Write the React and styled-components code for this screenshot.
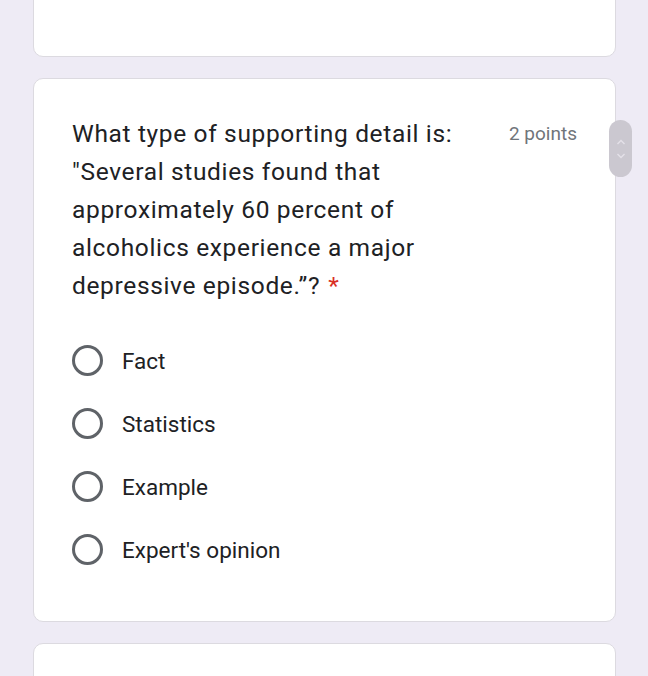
import React from "react";
import styled, { createGlobalStyle } from "styled-components";

const GlobalStyle = createGlobalStyle`
  html, body {
    margin: 0;
    padding: 0;
    background: #eeebf5;
    font-family: Roboto, "Liberation Sans", sans-serif;
    overflow: hidden;
  }
`;

const Page = styled.div`
  position: relative;
  height: 676px;
  overflow: hidden;
  padding: 0 32px 0 33px;
  display: flex;
  flex-direction: column;
  gap: 21px;
`;

const Card = styled.div`
  background: #fff;
  border: 1px solid #dcdae0;
  border-radius: 10px;
  box-sizing: border-box;
  flex-shrink: 0;
`;

const TopCard = styled(Card)`
  height: 77px;
  margin-top: -20px;
`;

const BottomCard = styled(Card)`
  height: 80px;
`;

const QuestionCard = styled(Card)`
  height: 544px;
  padding: 36px 38px 0 38px;
`;

const Header = styled.div`
  display: flex;
  align-items: flex-start;
  gap: 24px;
`;

const Title = styled.div`
  flex: 1;
  max-width: 410px;
  font-size: 24.5px;
  letter-spacing: 0.65px;
  line-height: 38px;
  color: #202124;
`;

const Required = styled.span`
  color: #d93025;
  margin-left: 8px;
`;

const Points = styled.div`
  margin-left: auto;
  font-size: 19px;
  line-height: 38px;
  color: #70757a;
  white-space: nowrap;
`;

const Options = styled.div`
  margin-top: 24px;
  display: flex;
  flex-direction: column;
`;

const Option = styled.label`
  display: flex;
  align-items: center;
  height: 63px;
  gap: 19px;
  font-size: 22.5px;
  color: #202124;
`;

const Radio = styled.span`
  width: 31px;
  height: 31px;
  box-sizing: border-box;
  border: 3px solid #5f6368;
  border-radius: 50%;
  flex-shrink: 0;
`;

const ScrollPill = styled.div`
  position: absolute;
  left: 609px;
  top: 120px;
  width: 23px;
  height: 57px;
  border-radius: 12px;
  background: #cbc8d0;
  display: flex;
  flex-direction: column;
  align-items: center;
  justify-content: center;
  gap: 6px;
`;

const Chevron = ({ up }) => (
  <svg width="10" height="8" viewBox="0 0 10 8">
    <path
      d={up ? "M1.5 6 L5 2.5 L8.5 6" : "M1.5 2 L5 5.5 L8.5 2"}
      fill="none"
      stroke="#e4e1e8"
      strokeWidth="1.4"
    />
  </svg>
);

const options = ["Fact", "Statistics", "Example", "Expert's opinion"];

export default function App() {
  return (
    <>
      <GlobalStyle />
      <Page>
        <TopCard />
        <QuestionCard>
          <Header>
            <Title>
              What type of supporting detail is: "Several studies found that
              approximately 60 percent of alcoholics experience a major
              depressive episode.”?
              <Required>*</Required>
            </Title>
            <Points>2 points</Points>
          </Header>
          <Options>
            {options.map((o) => (
              <Option key={o}>
                <Radio />
                {o}
              </Option>
            ))}
          </Options>
        </QuestionCard>
        <BottomCard />
        <ScrollPill>
          <Chevron up />
          <Chevron />
        </ScrollPill>
      </Page>
    </>
  );
}
